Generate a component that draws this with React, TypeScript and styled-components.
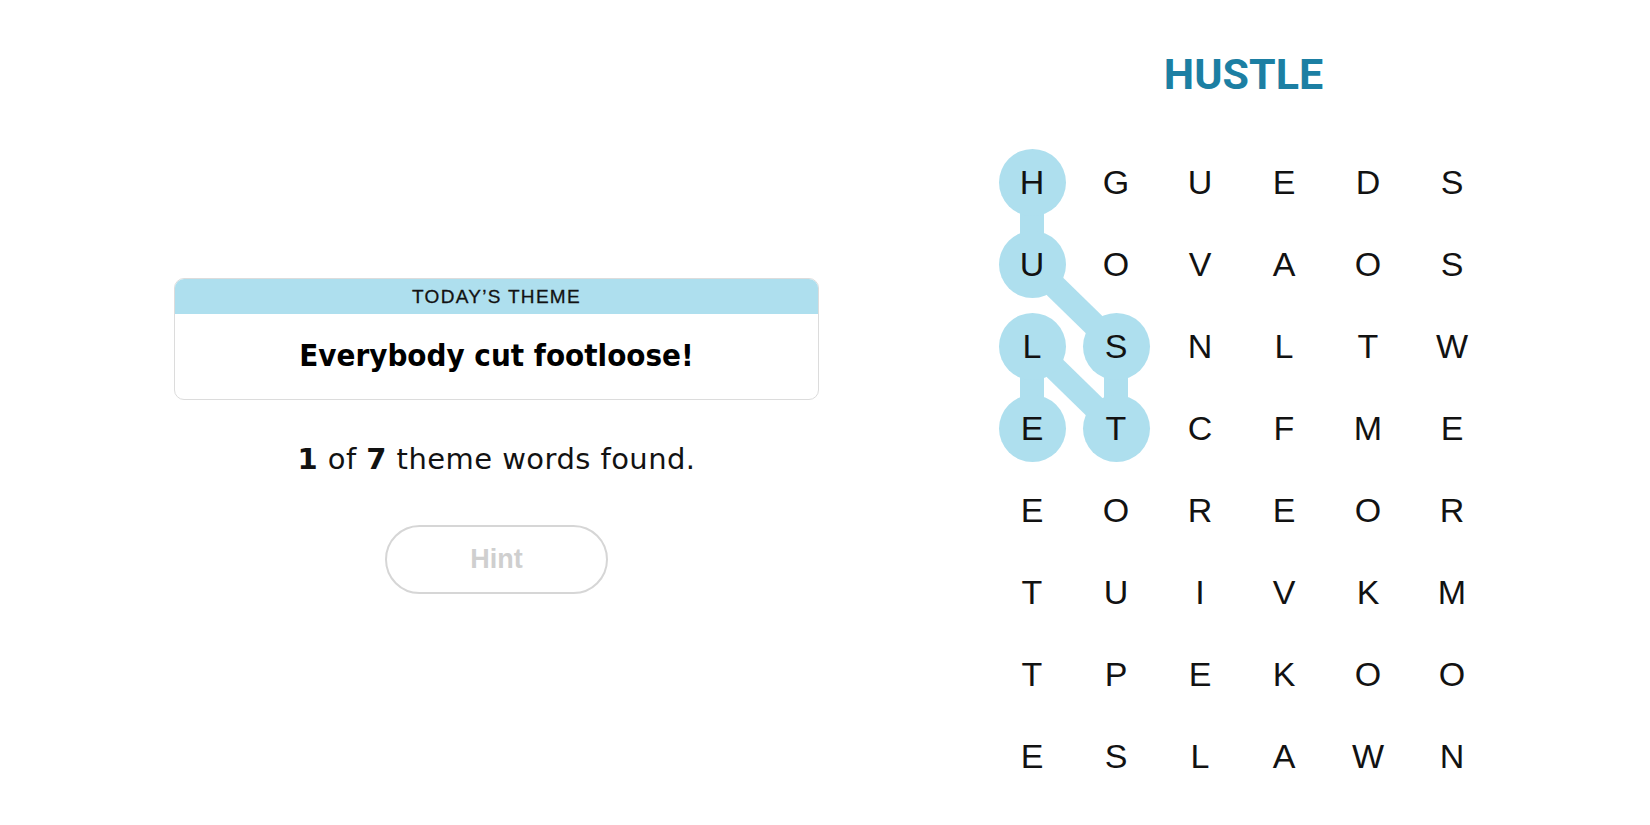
import React from "react";
import styled, { createGlobalStyle } from "styled-components";

const GlobalStyle = createGlobalStyle`
  html, body {
    margin: 0;
    padding: 0;
    background: #ffffff;
  }
  body {
    font-family: "Liberation Sans", Arial, sans-serif;
    color: #000;
  }
`;

const CELL_W = 84;
const CELL_H = 82;
const COLS = 6;

const LETTERS = [
  "HGUEDS",
  "UOVAOS",
  "LSNLTW",
  "ETCFME",
  "EOREOR",
  "TUIVKM",
  "TPEKOO",
  "ESLAWN",
];

// path of the word being spelled, as [row, col]
const PATH: [number, number][] = [
  [0, 0],
  [1, 0],
  [2, 1],
  [3, 1],
  [2, 0],
  [3, 0],
];

const Page = styled.main`
  display: flex;
  align-items: flex-start;
  width: 1650px;
  height: 825px;
  box-sizing: border-box;
  padding: 43px 0 0 174px;
  gap: 171px;
  overflow: hidden;
`;

const LeftPanel = styled.section`
  width: 645px;
  margin-top: 235px;
  display: flex;
  flex-direction: column;
  align-items: center;
`;

const ThemeCard = styled.div`
  width: 100%;
  box-sizing: border-box;
  border: 1px solid #dcdcdc;
  border-radius: 10px;
  overflow: hidden;
`;

const ThemeHeader = styled.div`
  background: #aedfee;
  height: 35px;
  display: flex;
  align-items: center;
  justify-content: center;
  font-family: "Liberation Sans", Arial, sans-serif;
  font-size: 19px;
  font-weight: 400;
  letter-spacing: 1.3px;
  -webkit-text-stroke: 0.3px #121212;
  color: #121212;
`;

const ThemeBody = styled.div`
  height: 85px;
  display: flex;
  align-items: center;
  justify-content: center;
  font-family: "DejaVu Sans Condensed", "Liberation Sans", sans-serif;
  font-weight: 700;
  font-size: 31px;
  color: #000;
  padding-bottom: 4px;
  box-sizing: border-box;
`;

const Progress = styled.p`
  margin: 42px 0 0;
  font-family: "DejaVu Sans", "Liberation Sans", sans-serif;
  font-size: 29px;
  letter-spacing: 0.45px;
  color: #121212;
  b {
    font-weight: 700;
  }
`;

const HintButton = styled.button`
  margin-top: 49px;
  width: 223px;
  height: 69px;
  border-radius: 35px;
  border: 2px solid #d6d6d6;
  background: #fff;
  color: #cfcfcf;
  font-family: "Liberation Sans", Arial, sans-serif;
  font-size: 27px;
  font-weight: 700;
  cursor: default;
`;

const RightPanel = styled.section`
  display: flex;
  flex-direction: column;
  align-items: center;
  width: ${CELL_W * COLS}px;
`;

const Title = styled.h1`
  margin: 0 0 0 3px;
  height: 62px;
  line-height: 62px;
  font-family: Roboto, "Liberation Sans", sans-serif;
  font-size: 43px;
  font-weight: 700;
  color: #1c7fa3;
`;

const Board = styled.div`
  position: relative;
  margin-top: 36px;
  display: grid;
  grid-template-columns: repeat(${COLS}, ${CELL_W}px);
  grid-auto-rows: ${CELL_H}px;
`;

const Connectors = styled.svg`
  position: absolute;
  inset: 0;
  z-index: 0;
  pointer-events: none;
`;

const Cell = styled.div`
  position: relative;
  z-index: 1;
  display: flex;
  align-items: center;
  justify-content: center;
`;

const Letter = styled.span<{ $selected: boolean }>`
  width: 67px;
  height: 67px;
  border-radius: 50%;
  display: flex;
  align-items: center;
  justify-content: center;
  background: ${(p) => (p.$selected ? "#aedfee" : "transparent")};
  font-family: "Liberation Sans", Arial, sans-serif;
  font-size: 34px;
  color: #121212;
`;

const center = ([r, c]: [number, number]) => ({
  x: c * CELL_W + CELL_W / 2,
  y: r * CELL_H + CELL_H / 2,
});

export default function App() {
  const selected = new Set(PATH.map(([r, c]) => `${r}-${c}`));
  const points = PATH.map(center);

  return (
    <>
      <GlobalStyle />
      <Page>
        <LeftPanel>
          <ThemeCard>
            <ThemeHeader>TODAY’S THEME</ThemeHeader>
            <ThemeBody>Everybody cut footloose!</ThemeBody>
          </ThemeCard>
          <Progress>
            <b>1</b> of <b>7</b> theme words found.
          </Progress>
          <HintButton disabled>Hint</HintButton>
        </LeftPanel>

        <RightPanel>
          <Title>HUSTLE</Title>
          <Board>
            <Connectors width={CELL_W * COLS} height={CELL_H * LETTERS.length}>
              {points.slice(1).map((p, i) => (
                <line
                  key={i}
                  x1={points[i].x}
                  y1={points[i].y}
                  x2={p.x}
                  y2={p.y}
                  stroke="#aedfee"
                  strokeWidth={24}
                />
              ))}
            </Connectors>
            {LETTERS.map((row, r) =>
              row.split("").map((ch, c) => (
                <Cell key={`${r}-${c}`}>
                  <Letter $selected={selected.has(`${r}-${c}`)}>{ch}</Letter>
                </Cell>
              ))
            )}
          </Board>
        </RightPanel>
      </Page>
    </>
  );
}
